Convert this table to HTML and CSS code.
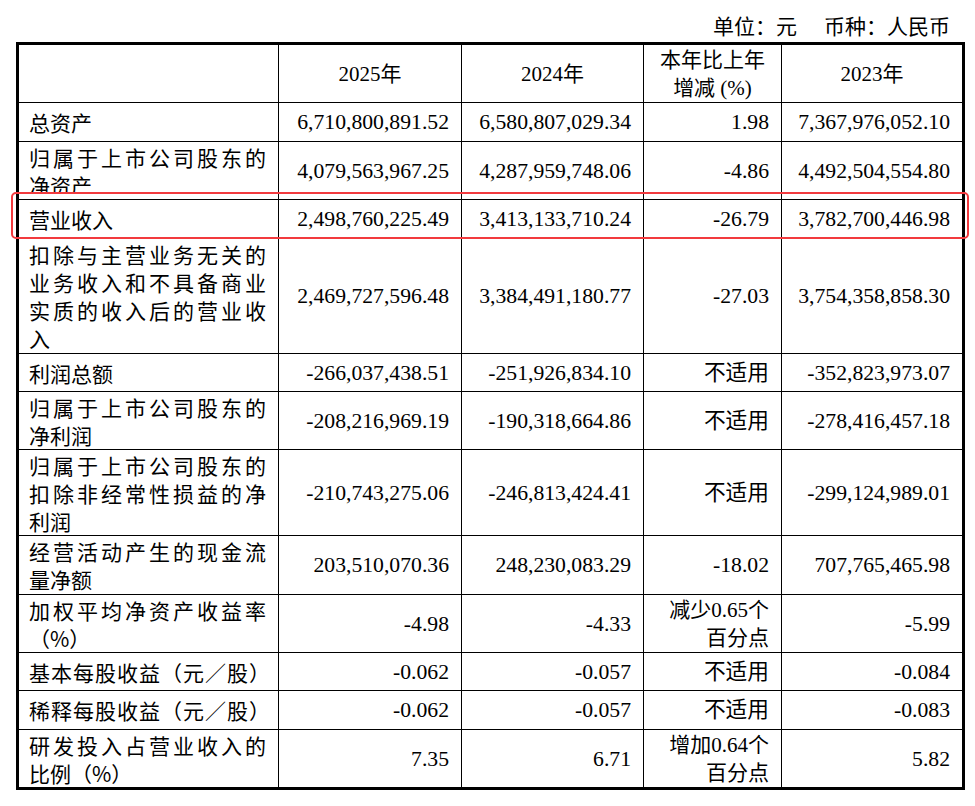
FILE: index.html
```html
<!DOCTYPE html>
<html lang="zh-CN">
<head>
<meta charset="utf-8">
<title>主要会计数据</title>
<link rel="stylesheet" href="styles.css">
</head>
<body>
<div class="page">
  <div class="unit"><span class="unit-a">单位：元</span><span>币种：人民币</span></div>
  <table class="fin">
    <colgroup>
      <col class="c1"><col class="c2"><col class="c3"><col class="c4"><col class="c5">
    </colgroup>
    <thead>
      <tr class="h-head">
        <th></th>
        <th>2025年</th>
        <th>2024年</th>
        <th><span class="ln">本年比上年</span><span class="ln">增减 (%)</span></th>
        <th>2023年</th>
      </tr>
    </thead>
    <tbody>
      <tr class="h39">
        <td class="lab">总资产</td>
        <td class="num">6,710,800,891.52</td><td class="num">6,580,807,029.34</td><td class="num">1.98</td><td class="num">7,367,976,052.10</td>
      </tr>
      <tr class="h58">
        <td class="lab"><div class="clip"><span class="ln j">归属于上市公司股东的</span><span class="ln">净资产</span></div></td>
        <td class="num">4,079,563,967.25</td><td class="num">4,287,959,748.06</td><td class="num">-4.86</td><td class="num">4,492,504,554.80</td>
      </tr>
      <tr class="h39">
        <td class="lab">营业收入</td>
        <td class="num">2,498,760,225.49</td><td class="num">3,413,133,710.24</td><td class="num">-26.79</td><td class="num">3,782,700,446.98</td>
      </tr>
      <tr class="h115">
        <td class="lab"><span class="ln j">扣除与主营业务无关的</span><span class="ln j">业务收入和不具备商业</span><span class="ln j">实质的收入后的营业收</span><span class="ln">入</span></td>
        <td class="num">2,469,727,596.48</td><td class="num">3,384,491,180.77</td><td class="num">-27.03</td><td class="num">3,754,358,858.30</td>
      </tr>
      <tr class="h38">
        <td class="lab">利润总额</td>
        <td class="num">-266,037,438.51</td><td class="num">-251,926,834.10</td><td class="num">不适用</td><td class="num">-352,823,973.07</td>
      </tr>
      <tr class="h58">
        <td class="lab"><span class="ln j">归属于上市公司股东的</span><span class="ln">净利润</span></td>
        <td class="num">-208,216,969.19</td><td class="num">-190,318,664.86</td><td class="num">不适用</td><td class="num">-278,416,457.18</td>
      </tr>
      <tr class="h86">
        <td class="lab"><span class="ln j">归属于上市公司股东的</span><span class="ln j">扣除非经常性损益的净</span><span class="ln">利润</span></td>
        <td class="num">-210,743,275.06</td><td class="num">-246,813,424.41</td><td class="num">不适用</td><td class="num">-299,124,989.01</td>
      </tr>
      <tr class="h59">
        <td class="lab"><span class="ln j">经营活动产生的现金流</span><span class="ln">量净额</span></td>
        <td class="num">203,510,070.36</td><td class="num">248,230,083.29</td><td class="num">-18.02</td><td class="num">707,765,465.98</td>
      </tr>
      <tr class="h58">
        <td class="lab"><span class="ln j">加权平均净资产收益率</span><span class="ln">（%）</span></td>
        <td class="num">-4.98</td><td class="num">-4.33</td><td class="num"><span class="ln">减少0.65个</span><span class="ln">百分点</span></td><td class="num">-5.99</td>
      </tr>
      <tr class="h38">
        <td class="lab"><span class="ln j eps">基本每股收益（元／股）</span></td>
        <td class="num">-0.062</td><td class="num">-0.057</td><td class="num">不适用</td><td class="num">-0.084</td>
      </tr>
      <tr class="h39">
        <td class="lab"><span class="ln j eps">稀释每股收益（元／股）</span></td>
        <td class="num">-0.062</td><td class="num">-0.057</td><td class="num">不适用</td><td class="num">-0.083</td>
      </tr>
      <tr class="h59">
        <td class="lab"><span class="ln j">研发投入占营业收入的</span><span class="ln">比例（%）</span></td>
        <td class="num">7.35</td><td class="num">6.71</td><td class="num"><span class="ln">增加0.64个</span><span class="ln">百分点</span></td><td class="num">5.82</td>
      </tr>
    </tbody>
  </table>
  <div class="mark"></div>
</div>
</body>
</html>
```
FILE: styles.css
```css
* { box-sizing: border-box; }
html, body { margin: 0; padding: 0; background: #fff; }
body {
  font-family: "Liberation Serif", "Noto Sans CJK SC", serif;
  color: #000;
  font-size: 21px;
  line-height: 28px;
  text-spacing-trim: space-all;
}
.page {
  position: relative;
  width: 975px;
  height: 806px;
  padding: 11px 0 0 16px;
}
.unit {
  height: 28px;
  margin-bottom: 3px;
  padding-right: 25px;
  text-align: right;
  white-space: nowrap;
  font-family: "Noto Sans CJK SC", sans-serif;
}
.unit-a { margin-right: 27px; }
.fin {
  border-collapse: collapse;
  table-layout: fixed;
  width: 949px;
  border: 3px solid #000;
}
.c1 { width: 261px; }
.c2 { width: 183px; }
.c3 { width: 182px; }
.c4 { width: 138px; }
.c5 { width: 182px; }
.fin th, .fin td {
  border: 1px solid #000;
  padding: 0 12px;
  vertical-align: middle;
  font-weight: normal;
}
.fin th { text-align: center; }
.fin td.lab {
  text-align: left;
  padding: 0 12px 0 10px;
  white-space: nowrap;
  font-family: "Noto Sans CJK SC", sans-serif;
}
.fin td.num {
  text-align: right;
  font-size: 21.7px;
  white-space: nowrap;
}
.fin td.num .ln { font-size: 21px; }
.ln { display: block; }
.j { text-align: justify; text-align-last: justify; }
.eps { width: 241px; }
.clip { clip-path: inset(0 0 6px 0); }
.h-head { height: 59px; }
.h38 { height: 38px; }
.h39 { height: 39px; }
.h58 { height: 58px; }
.h59 { height: 59px; }
.h86 { height: 86px; }
.h115 { height: 115px; }
.mark {
  position: absolute;
  left: 11px;
  top: 192px;
  width: 958px;
  height: 47px;
  border: 2px solid #f23a3e;
  border-radius: 5px;
  pointer-events: none;
}
```
